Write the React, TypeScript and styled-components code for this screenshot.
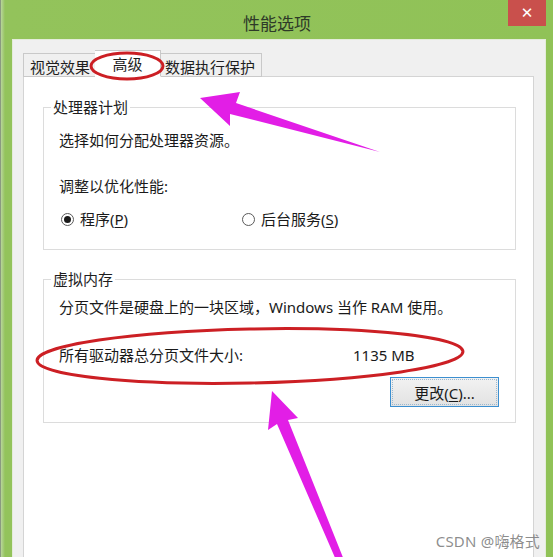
import React from 'react';
import styled, { createGlobalStyle } from 'styled-components';

const GlobalStyle = createGlobalStyle`
  html, body {
    margin: 0;
    padding: 0;
    background: #ffffff;
  }
  body {
    font-family: "Noto Sans", "Noto Sans CJK SC", sans-serif;
  }
`;

const Page = styled.div`
  position: relative;
  width: 553px;
  height: 557px;
  overflow: hidden;
`;

const Window = styled.div`
  width: 553px;
  height: 557px;
  display: flex;
  flex-direction: column;
  background: linear-gradient(90deg, #b9d69a 0px, #93c35b 4px, #90c257 100%);
  border-left: 1px solid #8a9a80;
  box-sizing: border-box;
`;

const TitleBar = styled.div`
  position: relative;
  height: 39px;
  display: flex;
  align-items: center;
  justify-content: center;
  flex-shrink: 0;
`;

const Title = styled.div`
  font-family: "Noto Sans CJK SC", sans-serif;
  font-size: 17px;
  color: #2e3a28;
  padding-top: 6px;
`;

const CloseButton = styled.div`
  position: absolute;
  top: 0;
  right: 7px;
  width: 38px;
  height: 26px;
  background: #c9504c;
  color: #ffffff;
  display: flex;
  align-items: center;
  justify-content: center;
  font-family: "DejaVu Sans", sans-serif;
  font-size: 15px;
  font-weight: bold;
`;

const Client = styled.div`
  flex: 1;
  margin: 0 7px 0 11px;
  background: #f0f0f0;
  border: 1px solid #e4ecda;
  border-bottom: none;
  padding: 12px 11px 0 10px;
  display: flex;
  flex-direction: column;
`;

const TabRow = styled.div`
  display: flex;
  align-items: flex-end;
  height: 25px;
  position: relative;
  z-index: 1;
  margin-bottom: -1px;
`;

const Tab = styled.div<{ $active?: boolean; $min?: number }>`
  font-family: "Noto Sans CJK SC", sans-serif;
  font-size: 15px;
  color: #1e1e1e;
  height: ${(p) => (p.$active ? 27 : 24)}px;
  min-width: ${(p) => p.$min ?? 0}px;
  box-sizing: border-box;
  padding: 0 6px;
  display: flex;
  align-items: center;
  justify-content: center;
  border: 1px solid #c9c9c9;
  border-bottom: ${(p) => (p.$active ? '1px solid #ffffff' : '1px solid #c9c9c9')};
  background: ${(p) => (p.$active ? '#ffffff' : '#f0f0f0')};
  margin: ${(p) => (p.$active ? '0 -2px' : '0')};
  position: relative;
  z-index: ${(p) => (p.$active ? 2 : 1)};
  padding-top: ${(p) => (p.$active ? 0 : 2)}px;
  & + & {
    border-left: none;
  }
`;

const Panel = styled.div`
  flex: 1;
  background: #ffffff;
  border: 1px solid #d4d4d4;
  border-bottom: none;
  padding: 21px 17px 0 19px;
`;

const Group = styled.fieldset<{ $gap?: number }>`
  margin: ${(p) => p.$gap ?? 0}px 0 0 0;
  padding: 0 16px 0 15px;
  border: 1px solid #dcdcdc;
  min-width: 0;
`;

const Legend = styled.legend`
  font-family: "Noto Sans CJK SC", sans-serif;
  font-size: 15px;
  line-height: 18px;
  color: #1e1e1e;
  padding: 0 2px;
  margin-left: -8px;
`;

const Line = styled.div<{ $top: number }>`
  font-family: "Noto Sans", "Noto Sans CJK SC", sans-serif;
  font-size: 15px;
  line-height: 20px;
  color: #1a1a1a;
  margin-top: ${(p) => p.$top}px;
  white-space: nowrap;
`;

const RadioRow = styled.div`
  display: grid;
  grid-template-columns: 181px auto;
  margin-top: 13px;
  padding-bottom: 20px;
  padding-left: 2px;
`;

const RadioItem = styled.div`
  display: flex;
  align-items: center;
  gap: 6px;
  font-family: "Noto Sans", "Noto Sans CJK SC", sans-serif;
  font-size: 15px;
  line-height: 20px;
  color: #1a1a1a;
`;

const RadioCircle = styled.span<{ $checked?: boolean }>`
  width: 13px;
  height: 13px;
  border-radius: 50%;
  border: 1px solid #5a5a5a;
  box-sizing: border-box;
  background: #ffffff;
  display: flex;
  align-items: center;
  justify-content: center;
  &::after {
    content: '';
    width: 7px;
    height: 7px;
    border-radius: 50%;
    background: ${(p) => (p.$checked ? '#1a1a1a' : 'transparent')};
  }
`;

const Key = styled.span`
  text-decoration: underline;
  text-underline-offset: 2px;
`;

const SizeRow = styled.div`
  display: grid;
  grid-template-columns: 294px auto;
  font-family: "Noto Sans", "Noto Sans CJK SC", sans-serif;
  font-size: 15px;
  line-height: 20px;
  color: #1a1a1a;
  margin-top: 28px;
`;

const ButtonRow = styled.div`
  display: flex;
  justify-content: flex-end;
  margin-top: 12px;
  padding-bottom: 15px;
`;

const Button = styled.div`
  width: 109px;
  height: 30px;
  box-sizing: border-box;
  border: 1px solid #3c8fd0;
  outline: 1px dotted #9ab8d0;
  outline-offset: -3px;
  background: linear-gradient(#f2f2f2, #e2e2e2);
  display: flex;
  align-items: center;
  justify-content: center;
  font-family: "Noto Sans", "Noto Sans CJK SC", sans-serif;
  font-size: 15px;
  color: #1a1a1a;
`;

const Overlay = styled.svg`
  position: absolute;
  left: 0;
  top: 0;
  z-index: 10;
  pointer-events: none;
`;

const Watermark = styled.div`
  position: absolute;
  right: 13px;
  bottom: 6px;
  z-index: 11;
  font-family: "Noto Sans", "Noto Sans CJK SC", sans-serif;
  font-size: 15px;
  color: rgba(120, 120, 120, 0.85);
  letter-spacing: 0.2px;
`;

const App = () => {
  return (
    <Page>
      <GlobalStyle />
      <Window>
        <TitleBar>
          <Title>性能选项</Title>
          <CloseButton>✕</CloseButton>
        </TitleBar>
        <Client>
          <TabRow>
            <Tab>视觉效果</Tab>
            <Tab $active $min={66}>高级</Tab>
            <Tab>数据执行保护</Tab>
          </TabRow>
          <Panel>
            <Group>
              <Legend>处理器计划</Legend>
              <Line $top={14}>选择如何分配处理器资源。</Line>
              <Line $top={26}>调整以优化性能:</Line>
              <RadioRow>
                <RadioItem>
                  <RadioCircle $checked />
                  <span>程序(<Key>P</Key>)</span>
                </RadioItem>
                <RadioItem>
                  <RadioCircle />
                  <span>后台服务(<Key>S</Key>)</span>
                </RadioItem>
              </RadioRow>
            </Group>
            <Group $gap={20}>
              <Legend>虚拟内存</Legend>
              <Line $top={9}>分页文件是硬盘上的一块区域，Windows 当作 RAM 使用。</Line>
              <SizeRow>
                <span>所有驱动器总分页文件大小:</span>
                <span>1135 MB</span>
              </SizeRow>
              <ButtonRow>
                <Button>
                  <span>更改(<Key>C</Key>)...</span>
                </Button>
              </ButtonRow>
            </Group>
          </Panel>
        </Client>
      </Window>

      <Overlay width="553" height="557" viewBox="0 0 553 557">
        <ellipse cx="127" cy="66" rx="36" ry="13" fill="none" stroke="#cc1f24" strokeWidth="3" />
        <ellipse
          cx="250"
          cy="356"
          rx="213"
          ry="27"
          fill="none"
          stroke="#cc1f24"
          strokeWidth="3"
          transform="rotate(-1.2 250 356)"
        />
        <polygon
          points="200,98 240,92 236,103 380,152 230,114 230,126"
          fill="#e21ee6"
        />
        <polygon
          points="272,391 298,418 288,420 344,560 336,560 277,424 268,430"
          fill="#e21ee6"
        />
      </Overlay>
      <Watermark>CSDN @嗨格式</Watermark>
    </Page>
  );
};

export default App;
